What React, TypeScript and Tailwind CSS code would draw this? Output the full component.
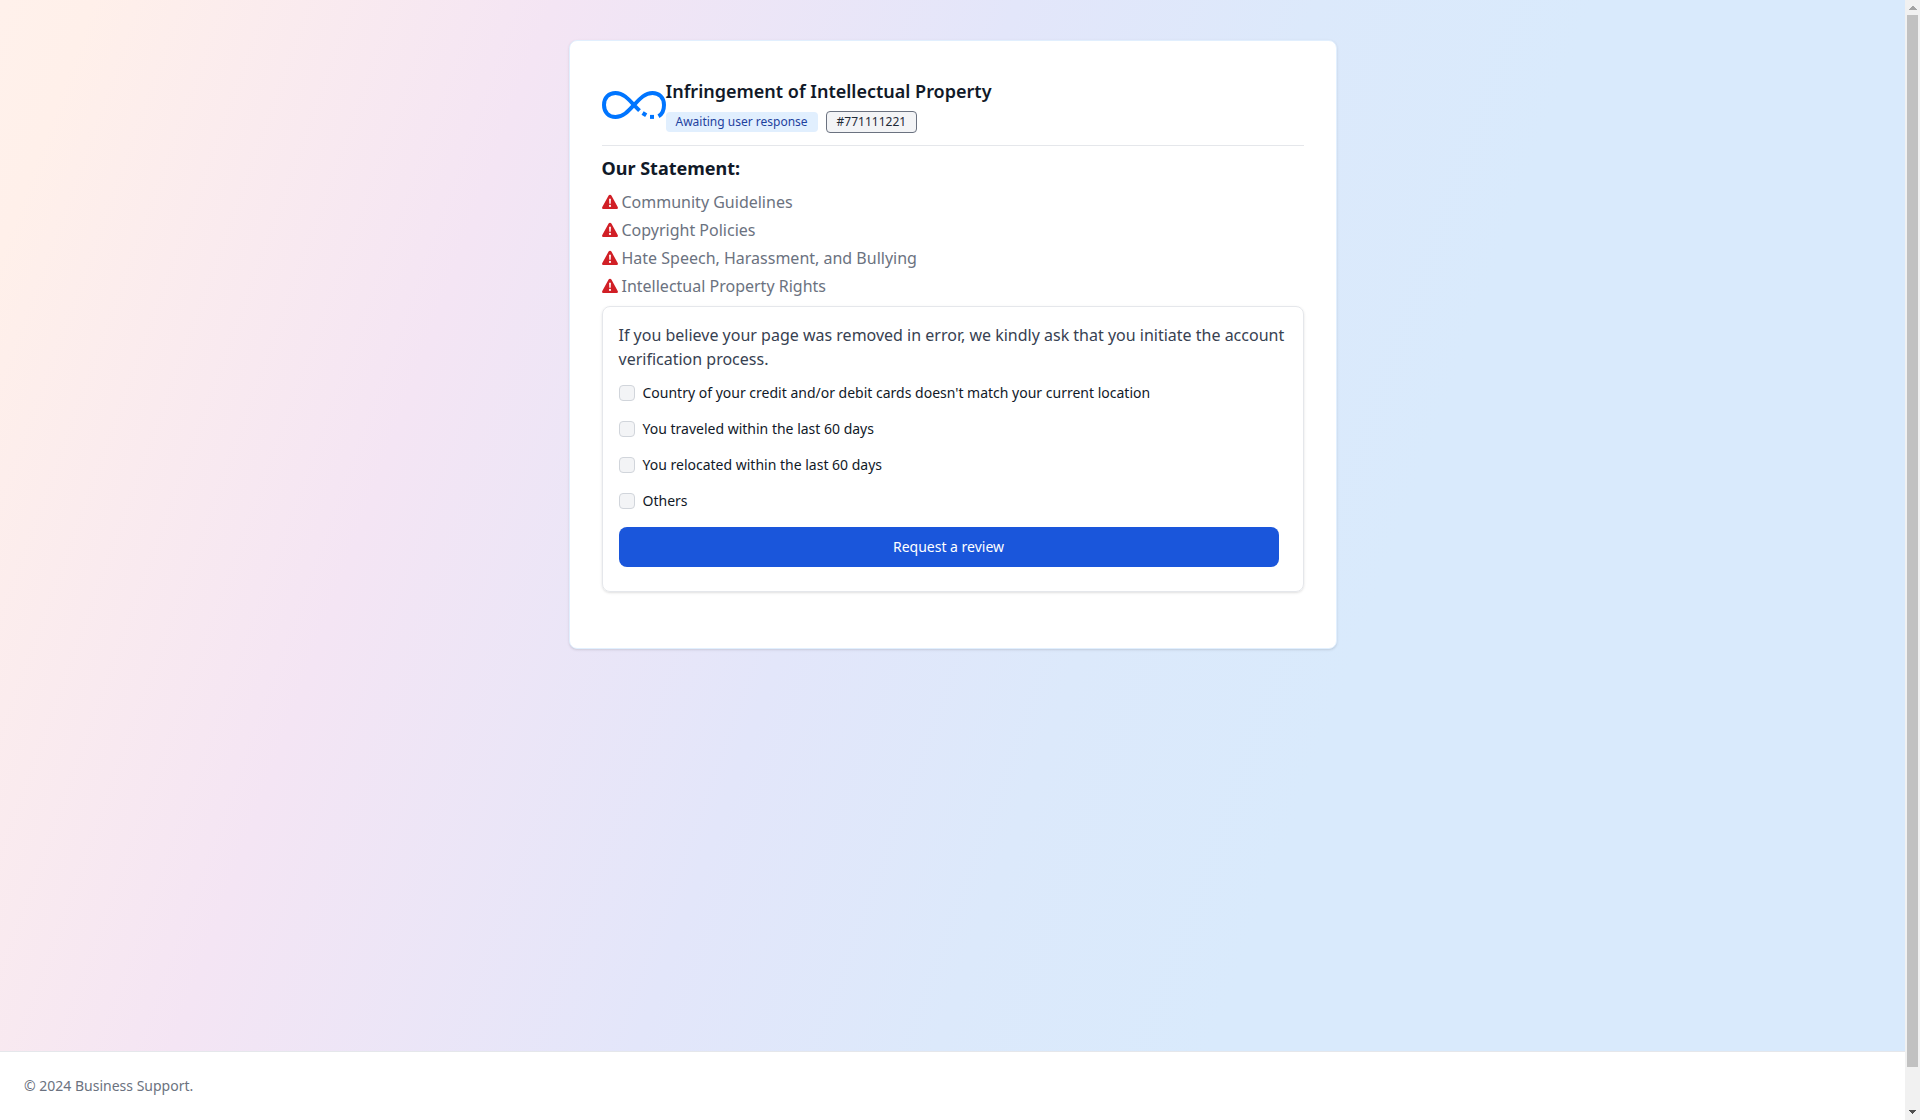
const statements = [
  "Community Guidelines",
  "Copyright Policies",
  "Hate Speech, Harassment, and Bullying",
  "Intellectual Property Rights",
];

const reasons = [
  { id: "country", label: "Country of your credit and/or debit cards doesn't match your current location" },
  { id: "traveled", label: "You traveled within the last 60 days" },
  { id: "relocated", label: "You relocated within the last 60 days" },
  { id: "others", label: "Others" },
];

function Logo() {
  return (
    <svg viewBox="0 0 64 28" className="mb-1 h-7 w-16 shrink-0" fill="none" stroke="#0075ff" strokeWidth="4" aria-hidden="true">
      <path d="M56.500 25.300C60.500 23 62 19.500 62 14C62 6.500 57 2 50.500 2C43 2 38 7.500 32 14C26 20.500 21 26 13.500 26C7 26 2 21.500 2 14C2 6.500 7 2 13.500 2C21 2 26 7.500 32 14C34 16.200 35.800 18 37.500 19.600" />
      <path d="M40.600 22L44.200 24.300" />
      <path d="M48 25.900L52 25.900" />
    </svg>
  );
}

function WarningIcon() {
  return (
    <svg viewBox="0 0 16 16" className="size-4 shrink-0" aria-hidden="true">
      <path
        fill="#d11f26"
        d="M6.600 1.600C7.200.500 8.800.500 9.400 1.600L15.700 12.900C16.300 14 15.700 15 14.500 15H1.500C.300 15-.300 14 .300 12.900Z"
      />
      <path fill="#fff" d="M7.100 4.700H8.900L8.700 9.700H7.300Z" />
      <circle cx="8" cy="11.900" r="1.100" fill="#fff" />
    </svg>
  );
}

function ScrollBar() {
  return (
    <div className="flex h-screen w-[15px] shrink-0 flex-col items-center bg-[#f1f1f1]" aria-hidden="true">
      <svg viewBox="0 0 15 15" className="size-[15px] shrink-0" fill="#a3a3a3" shapeRendering="crispEdges">
        <path d="M7 6h2v1h1v1h1v1h1v1H4V9h1V8h1V7h1z" />
      </svg>
      <div className="w-[11px] grow bg-[#c1c1c1]" />
      <div className="h-[38px] shrink-0" />
      <svg viewBox="0 0 15 15" className="size-[15px] shrink-0" fill="#505050" shapeRendering="crispEdges">
        <path d="M4 5h7v1h-1v1h-1v1h-1v1H7V8H6V7H5V6H4z" />
      </svg>
    </div>
  );
}

export default function App() {
  return (
    <div className="flex font-['Noto_Sans',sans-serif] text-gray-900">
      <div className="flex min-h-screen min-w-0 grow flex-col bg-[linear-gradient(110deg,#fff1eb_0%,#fff0ea_4%,#f4e5f4_24%,#e3e6fa_44%,#dce9fb_57%,#d9eafc_69%,#d9eafc_100%)]">
        <main className="grow px-4 py-10">
          <section className="mx-auto max-w-3xl rounded-lg border border-[#e1effe] bg-white px-8 pt-10 pb-14 shadow-sm">
            <header className="flex items-center border-b border-[#e5e7eb] pb-3">
              <Logo />
              <div>
                <h1 className="text-lg leading-5 font-semibold text-[#111928]">Infringement of Intellectual Property</h1>
                <div className="mt-2.5 flex items-center gap-2 text-xs">
                  <span className="rounded-sm bg-[#e1effe] px-2.5 py-0.5 text-[#1e429f]">Awaiting user response</span>
                  <span className="rounded-sm border border-[#6b7280] bg-[#f3f4f6] px-2.5 py-0.5 text-[#1f2a37]">#771111221</span>
                </div>
              </div>
            </header>
            <h2 className="mt-2 text-lg font-bold text-[#111928]">Our Statement:</h2>
            <ul className="mt-2 flex flex-col gap-1 text-[#6b7280]">
              {statements.map((s) => (
                <li key={s} className="flex items-center gap-1">
                  <WarningIcon />
                  {s}
                </li>
              ))}
            </ul>
            <form className="mt-2 rounded-lg border border-[#e5e7eb] px-4 pt-4 pb-6 shadow-sm">
              <p className="text-[#374151]">
                If you believe your page was removed in error, we kindly ask that you initiate the account verification
                process.
              </p>
              <div className="mt-3 flex flex-col gap-4">
                {reasons.map((r) => (
                  <div key={r.id} className="flex items-center gap-2">
                    <input
                      id={r.id}
                      type="checkbox"
                      className="size-4 appearance-none rounded-sm border border-[#d1d5db] bg-[#f3f4f6] checked:bg-[#1c64f2]"
                    />
                    <label htmlFor={r.id} className="text-sm text-[#111928]">
                      {r.label}
                    </label>
                  </div>
                ))}
              </div>
              <div className="mt-4 pr-2">
                <button type="button" className="w-full rounded-lg bg-[#1a56db] px-5 py-2.5 text-sm text-white">
                  Request a review
                </button>
              </div>
            </form>
          </section>
        </main>
        <footer className="border-t border-[#e5e7eb] bg-white p-6 text-sm text-[#6b7280]">© 2024 Business Support.</footer>
      </div>
      <ScrollBar />
    </div>
  );
}
